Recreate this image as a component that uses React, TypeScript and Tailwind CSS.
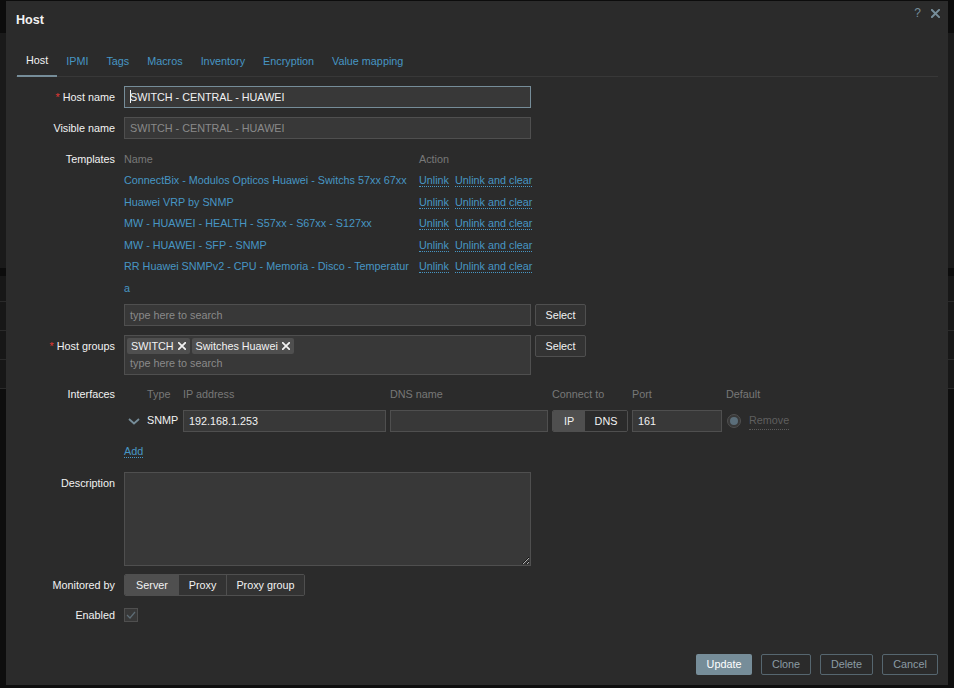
import React from 'react';

const templates = [
  'ConnectBix - Modulos Opticos Huawei - Switchs 57xx 67xx',
  'Huawei VRP by SNMP',
  'MW - HUAWEI - HEALTH - S57xx - S67xx - S127xx',
  'MW - HUAWEI - SFP - SNMP',
];

function XIcon({ size = 7, color = '#f2f2f2', stroke = 2 }: { size?: number; color?: string; stroke?: number }) {
  return (
    <svg width={size} height={size} viewBox="0 0 10 10" fill="none">
      <path d="M1 1l8 8M9 1l-8 8" stroke={color} strokeWidth={stroke} strokeLinecap="square" />
    </svg>
  );
}

function Row({ label, required, children, className = '' }: { label: string; required?: boolean; children: React.ReactNode; className?: string }) {
  return (
    <div className={`flex gap-[9px] ${className}`}>
      <div className="w-[99px] shrink-0 text-right leading-[22px] text-[#f2f2f2]">
        {required && <span className="mr-[3px] text-[#e33734]">*</span>}
        {label}
      </div>
      <div className="min-w-0 flex-1">{children}</div>
    </div>
  );
}

function Field({ value, placeholder, className = '', focused }: { value?: string; placeholder?: string; className?: string; focused?: boolean }) {
  return (
    <div
      className={`h-[22px] overflow-hidden whitespace-nowrap border bg-[#383838] px-[5px] leading-[20px] ${
        focused ? 'border-[#768d99]' : 'border-[#4f4f4f]'
      } ${className}`}
    >
      {focused && <span className="mr-[-1px] inline-block h-[13px] w-px translate-y-[2px] bg-[#f2f2f2]" />}
      {value ? <span className="text-[#f2f2f2]">{value}</span> : <span className="text-[#8a8a8a]">{placeholder}</span>}
    </div>
  );
}

function Link({ children, className = '' }: { children: React.ReactNode; className?: string }) {
  return <span className={`border-b border-dotted border-[#4796c4] text-[#4796c4] ${className}`}>{children}</span>;
}

function GreyButton({ children }: { children: React.ReactNode }) {
  return (
    <div className="flex h-[22px] w-[51px] shrink-0 items-center justify-center rounded-[2px] border border-[#4f4f4f] bg-[#333333] text-[#f2f2f2]">
      {children}
    </div>
  );
}

export default function App() {
  return (
    <div className="relative h-[688px] w-[954px] overflow-hidden bg-[#0e0e0e] font-['Liberation_Sans',Arial,sans-serif] text-[10.8px] text-[#f2f2f2]">
      {/* page behind the dialog */}
      <div className="h-[33px] bg-[#0c0c0c]" />
      <div className="h-[235px] bg-[#1a1a1a]" />
      <div className="h-[8px] bg-[#0c0c0c]" />
      <div className="h-[26px] border-b border-[#2a2a2a] bg-[#171717]" />
      <div className="h-[29px] border-b border-[#2a2a2a] bg-[#171717]" />
      <div className="h-[29px] border-b border-[#2a2a2a] bg-[#171717]" />
      <div className="h-[29px] border-b border-[#2a2a2a] bg-[#171717]" />

      {/* dialog */}
      <div className="absolute left-[6px] top-[1px] flex h-[684px] w-[942px] flex-col bg-[#2b2b2b]">
        <div className="relative flex h-[38px] items-center px-[10px]">
          <h1 className="text-[12.6px] font-bold text-[#f2f2f2]">Host</h1>
          <div className="absolute right-[8px] top-[6px] flex items-center gap-[10px]">
            <span className="text-[12px] leading-[12px] text-[#768d99]">?</span>
            <XIcon size={9} color="#768d99" stroke={2.2} />
          </div>
        </div>

        {/* tabs */}
        <div className="mx-[10px] mt-[7px] flex h-[31px] border-b border-[#383838] pl-[1px]">
          {['Host', 'IPMI', 'Tags', 'Macros', 'Inventory', 'Encryption', 'Value mapping'].map((t, i) => (
            <div
              key={t}
              className={`-mb-px flex h-[31px] items-center px-[9px] ${
                i === 0 ? 'border-b-2 border-[#768d99] text-[#f2f2f2]' : 'text-[#4796c4]'
              }`}
            >
              {t}
            </div>
          ))}
        </div>

        {/* form */}
        <div className="mt-[9px] px-[10px]">
          <Row label="Host name" required>
            <Field value="SWITCH - CENTRAL - HUAWEI" focused className="w-[407px]" />
          </Row>
          <Row label="Visible name" className="mt-[9px]">
            <Field placeholder="SWITCH - CENTRAL - HUAWEI" className="w-[407px]" />
          </Row>

          <Row label="Templates" className="mt-[9px]">
            <div className="grid w-[420px] grid-cols-[295px_1fr] leading-[21.5px]">
              <div className="leading-[22px] text-[#787878]">Name</div>
              <div className="leading-[22px] text-[#787878]">Action</div>
              {templates.map((t) => (
                <React.Fragment key={t}>
                  <div className="whitespace-nowrap text-[#4796c4]">{t}</div>
                  <div className="whitespace-nowrap">
                    <Link className="mr-[6px]">Unlink</Link>
                    <Link>Unlink and clear</Link>
                  </div>
                </React.Fragment>
              ))}
              <div className="whitespace-nowrap text-[#4796c4]">
                RR Huawei SNMPv2 - CPU - Memoria - Disco - Temperatur
                <br />a
              </div>
              <div className="whitespace-nowrap">
                <Link className="mr-[6px]">Unlink</Link>
                <Link>Unlink and clear</Link>
              </div>
            </div>
            <div className="mt-[5px] flex gap-[4px]">
              <Field placeholder="type here to search" className="w-[407px]" />
              <GreyButton>Select</GreyButton>
            </div>
          </Row>

          <Row label="Host groups" required className="mt-[9px]">
            <div className="flex gap-[4px]">
              <div className="h-[40px] w-[407px] border border-[#4f4f4f] bg-[#383838] pl-[2px] pt-[2px]">
                <div className="flex gap-[2px]">
                  {['SWITCH', 'Switches Huawei'].map((g) => (
                    <div key={g} className="flex h-[16px] items-center gap-[4px] rounded-[2px] bg-[#4f4f4f] pl-[4px] pr-[4px] leading-[16px]">
                      {g}
                      <XIcon size={8} stroke={2.2} />
                    </div>
                  ))}
                </div>
                <div className="pl-[3px] leading-[18px] text-[#8a8a8a]">type here to search</div>
              </div>
              <GreyButton>Select</GreyButton>
            </div>
          </Row>

          <div className="mt-[10px] flex gap-[9px]">
            <div className="w-[99px] shrink-0 text-right leading-[18px]">Interfaces</div>
            <div className="grid grid-cols-[19px_32px_203px_158px_76px_90px_auto] gap-x-[4px] gap-y-[7px]">
              <div />
              <div className="leading-[18px] text-[#787878]">Type</div>
              <div className="leading-[18px] text-[#787878]">IP address</div>
              <div className="leading-[18px] text-[#787878]">DNS name</div>
              <div className="leading-[18px] text-[#787878]">Connect to</div>
              <div className="leading-[18px] text-[#787878]">Port</div>
              <div className="leading-[18px] text-[#787878]">Default</div>

              <div className="flex items-center justify-center">
                <svg width="12" height="7" viewBox="0 0 12 7" fill="none">
                  <path d="M1 1l5 4.5L11 1" stroke="#768d99" strokeWidth="1.8" />
                </svg>
              </div>
              <div className="leading-[20px]">SNMP</div>
              <Field value="192.168.1.253" />
              <Field />
              <div className="flex h-[22px] overflow-hidden rounded-[2px] border border-[#4f4f4f]">
                <div className="flex w-[32px] items-center justify-center bg-[#4f4f4f]">IP</div>
                <div className="flex flex-1 items-center justify-center bg-[#2b2b2b]">DNS</div>
              </div>
              <Field value="161" />
              <div className="flex items-center gap-[8px] pl-[1px]">
                <div className="flex h-[14px] w-[14px] items-center justify-center rounded-full border border-[#4f4f4f] bg-[#383838]">
                  <div className="h-[8px] w-[8px] rounded-full bg-[#5b6e7a]" />
                </div>
                <span className="border-b border-dotted border-[#5a5a5a] text-[#5f5f5f]">Remove</span>
              </div>
            </div>
          </div>

          <div className="mt-[8px] flex gap-[9px] leading-[22px]">
            <div className="w-[99px] shrink-0" />
            <div>
              <Link>Add</Link>
            </div>
          </div>

          <Row label="Description" className="mt-[10px]">
            <textarea
              readOnly
              className="block h-[94px] w-[407px] resize-y border border-[#4f4f4f] bg-[#383838] outline-none"
            />
          </Row>

          <Row label="Monitored by" className="mt-[8px]">
            <div className="flex h-[22px] w-fit overflow-hidden rounded-[2px] border border-[#4f4f4f]">
              <div className="flex w-[54px] items-center justify-center bg-[#4f4f4f]">Server</div>
              <div className="flex w-[48px] items-center justify-center border-r border-[#4f4f4f] bg-[#333333]">Proxy</div>
              <div className="flex w-[77px] items-center justify-center bg-[#333333]">Proxy group</div>
            </div>
          </Row>

          <Row label="Enabled" className="mt-[8px]">
            <div className="flex h-[22px] items-center">
              <div className="flex h-[14px] w-[14px] items-center justify-center border border-[#4f4f4f] bg-[#383838]">
                <svg width="10" height="8" viewBox="0 0 10 8" fill="none">
                  <path d="M1 4l3 3 5-6" stroke="#5e6d76" strokeWidth="1.2" />
                </svg>
              </div>
            </div>
          </Row>
        </div>

        {/* footer */}
        <div className="mt-auto flex justify-end gap-[9px] px-[10px] pb-[10px]">
          <div className="flex h-[21px] w-[56px] items-center justify-center rounded-[2px] bg-[#768d99] text-[#ffffff]">Update</div>
          {[
            ['Clone', 'w-[50px]'],
            ['Delete', 'w-[53px]'],
            ['Cancel', 'w-[56px]'],
          ].map(([b, w]) => (
            <div key={b} className={`flex h-[21px] ${w} items-center justify-center rounded-[2px] border border-[#56666f] text-[#8c9ba4]`}>
              {b}
            </div>
          ))}
        </div>
      </div>
    </div>
  );
}
